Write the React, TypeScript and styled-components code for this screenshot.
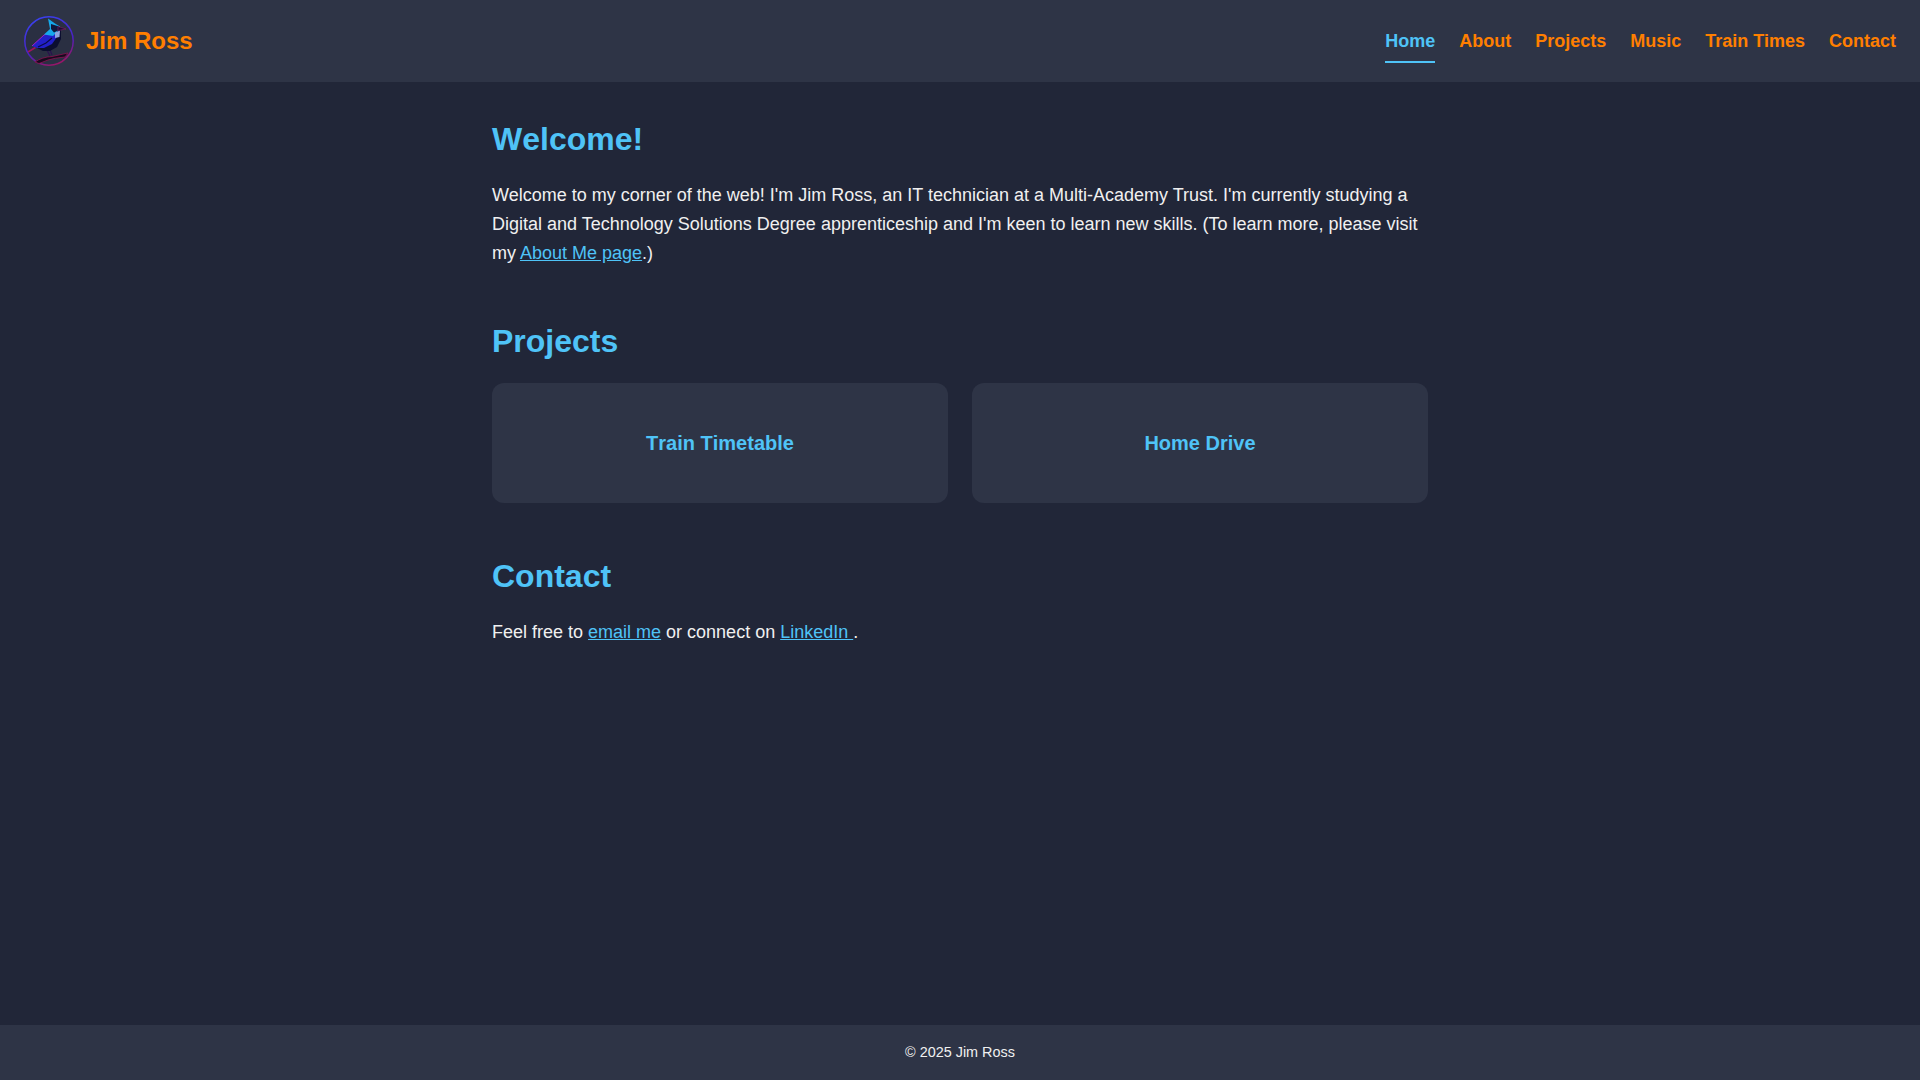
import styled, { createGlobalStyle } from 'styled-components';

const GlobalStyle = createGlobalStyle`
  html, body {
    margin: 0;
    padding: 0;
  }
  body {
    background: #212638;
    color: #f0f0f0;
    font-family: "Liberation Sans", Arial, sans-serif;
    line-height: 1.6;
  }
  * {
    box-sizing: border-box;
  }
`;

const Page = styled.div`
  display: flex;
  flex-direction: column;
  min-height: 100vh;
`;

const Header = styled.header`
  display: flex;
  align-items: center;
  justify-content: space-between;
  height: 82px;
  padding: 0 24px;
  background: #2e3446;
`;

const Brand = styled.a`
  display: flex;
  align-items: center;
  gap: 12px;
  color: #ff7f00;
  font-size: 24px;
  font-weight: 700;
  text-decoration: none;
`;

const Nav = styled.nav`
  display: flex;
  gap: 24px;
`;

const NavLink = styled.a<{ $active?: boolean }>`
  position: relative;
  padding: 8px 0;
  color: ${(p) => (p.$active ? '#4fc3f7' : '#ff7f00')};
  font-size: 18px;
  font-weight: 700;
  text-decoration: none;

  &::after {
    content: '';
    position: absolute;
    left: 0;
    right: 0;
    bottom: 0;
    height: 2px;
    background: ${(p) => (p.$active ? '#4fc3f7' : 'transparent')};
  }
`;

const Main = styled.main`
  flex: 1;
  width: 100%;
  max-width: 1000px;
  margin: 0 auto;
  padding: 32px;
`;

const Section = styled.section`
  margin-bottom: 48px;
`;

const Heading = styled.h2`
  margin: 0 0 16px;
  color: #4fc3f7;
  font-size: 32px;
  font-weight: 700;
  line-height: 1.6;
  font-kerning: none;
`;

const Text = styled.p`
  margin: 0;
  font-size: 18px;
  line-height: 1.6;
`;

const TextLink = styled.a`
  color: #4fc3f7;
  text-decoration: underline;
`;

const CardGrid = styled.div`
  display: grid;
  grid-template-columns: repeat(2, 1fr);
  gap: 24px;
`;

const Card = styled.a`
  display: flex;
  align-items: center;
  justify-content: center;
  height: 120px;
  border-radius: 12px;
  background: #2e3446;
  color: #4fc3f7;
  font-size: 20px;
  font-weight: 700;
  font-kerning: none;
  text-decoration: none;
`;

const Footer = styled.footer`
  display: flex;
  align-items: center;
  justify-content: center;
  height: 55px;
  background: #2e3446;
  font-size: 14.4px;
`;

const Logo = () => (
  <svg width="50" height="50" viewBox="0 0 50 50" aria-hidden="true">
    <defs>
      <linearGradient id="ring" x1="0.3" y1="0" x2="0.7" y2="1">
        <stop offset="0" stopColor="#3a40f0" />
        <stop offset="0.6" stopColor="#4a22c0" />
        <stop offset="1" stopColor="#a01460" />
      </linearGradient>
    </defs>
    <circle cx="25" cy="25" r="24.2" fill="#2a2f42" stroke="url(#ring)" strokeWidth="1.5" />
    {/* branch */}
    <path d="M11 46 Q18 41 28 40.5 L44 37 L41 41 Q30 42 24 44 L15 47.5 Z" fill="#170a1e" stroke="#8a1250" strokeWidth="0.8" />
    {/* tail */}
    <path d="M4 36 L13 30.5" stroke="#a0145c" strokeWidth="1.7" fill="none" />
    {/* feet */}
    <path d="M23 34 L26 40 M26 34 L28 39" stroke="#2a1050" strokeWidth="1.1" fill="none" />
    {/* belly */}
    <path d="M29 10 L37 13 L37 23 L33 31 L26 35 L19 35 L11 31 L22 20 Z" fill="#0b0e30" />
    {/* wing */}
    <path d="M8 30 L20 19 L29 15 L33 21 L28 28 L20 32 L13 32 Z" fill="#2220c8" />
    <path d="M8 30 L20 19 L26 16.5" stroke="#b020d0" strokeWidth="0.9" fill="none" />
    <path d="M14 31 L22 27 L28 22" stroke="#0a0c40" strokeWidth="1.1" fill="none" />
    {/* crest and nape */}
    <path d="M24 2.5 L31 7.5 L36 10.5 L33 16 L29 20 L20 18.5 L26 13 Z" fill="#16a8ea" />
    <path d="M27 8 L35 10.5 L35 14 L30 16.5 L27 13 Z" fill="#10173c" />
    {/* chest */}
    <path d="M31 16.5 L36 14.5 L35.5 21 L31 22 Z" fill="#8ea4dc" />
    {/* beak */}
    <path d="M34 10.5 L42 13 L34 14.5 Z" fill="#1a1030" stroke="#9a1a70" strokeWidth="0.5" />
  </svg>
);

export default function App() {
  return (
    <>
      <GlobalStyle />
      <Page>
        <Header>
          <Brand href="#">
            <Logo />
            Jim Ross
          </Brand>
          <Nav>
            <NavLink href="#" $active>Home</NavLink>
            <NavLink href="#">About</NavLink>
            <NavLink href="#">Projects</NavLink>
            <NavLink href="#">Music</NavLink>
            <NavLink href="#">Train Times</NavLink>
            <NavLink href="#">Contact</NavLink>
          </Nav>
        </Header>
        <Main>
          <Section>
            <Heading>Welcome!</Heading>
            <Text>
              Welcome to my corner of the web! I'm Jim Ross, an IT technician at a Multi-Academy Trust. I'm
              currently studying a Digital and Technology Solutions Degree apprenticeship and I'm keen to learn
              new skills. (To learn more, please visit my <TextLink href="#">About Me page</TextLink>.)
            </Text>
          </Section>
          <Section>
            <Heading>Projects</Heading>
            <CardGrid>
              <Card href="#">Train Timetable</Card>
              <Card href="#">Home Drive</Card>
            </CardGrid>
          </Section>
          <Section>
            <Heading>Contact</Heading>
            <Text>
              Feel free to <TextLink href="#">email me</TextLink> or connect on{' '}
              <TextLink href="#">LinkedIn </TextLink>.
            </Text>
          </Section>
        </Main>
        <Footer>© 2025 Jim Ross</Footer>
      </Page>
    </>
  );
}
